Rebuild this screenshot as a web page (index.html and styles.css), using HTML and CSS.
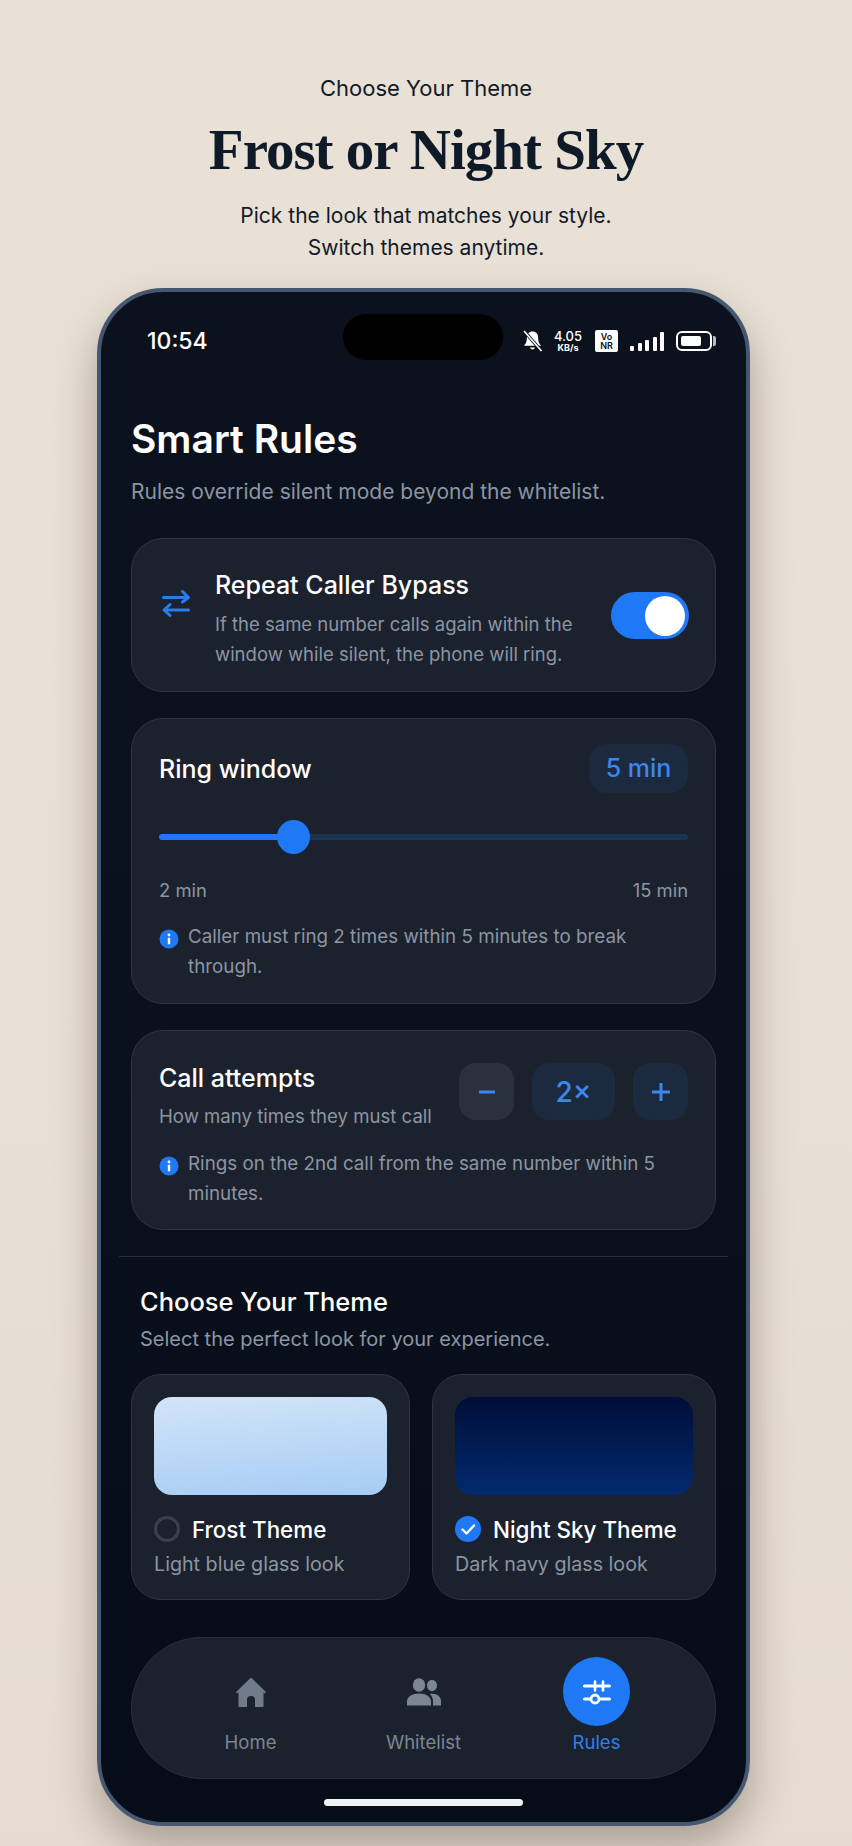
FILE: index.html
```html
<!DOCTYPE html>
<html lang="en">
<head>
    <meta charset="UTF-8">
    <meta name="viewport" content="width=device-width, initial-scale=1.0">
    <title>Frost or Night Sky</title>
    <link rel="stylesheet" href="styles.css">
</head>
<body>
    <header class="promo">
        <p class="promo-kicker">Choose Your Theme</p>
        <h1 class="promo-title">Frost or Night Sky</h1>
        <p class="promo-sub">Pick the look that matches your style.<br>Switch themes anytime.</p>
    </header>

    <main class="phone">
        <div class="island"></div>

        <div class="status">
            <span class="status-time">10:54</span>
            <div class="status-icons">
                <svg class="ico-bell" viewBox="0 0 21 22" width="21" height="22">
                    <path d="M10.500 1.500c-3.600 0-5.600 2.600-5.600 5.800 0 4.400-1.100 6.600-3 8.500h17.200c-1.900-1.900-3-4.100-3-8.500 0-3.200-2-5.800-5.600-5.800z" fill="#fff"/>
                    <path d="M8 17.500a2.600 2.600 0 0 0 5 0z" fill="#fff"/>
                    <path d="M3 2 19 20.500" stroke="#0a111c" stroke-width="3.400"/>
                    <path d="M2 1 19.500 21" stroke="#fff" stroke-width="1.700"/>
                </svg>
                <div class="speed"><span>4.05</span><span class="speed-unit">KB/s</span></div>
                <div class="vonr">Vo<br>NR</div>
                <div class="signal">
                    <i class="bar bar-1"></i><i class="bar bar-2"></i><i class="bar bar-3"></i><i class="bar bar-4"></i><i class="bar bar-5"></i>
                </div>
                <div class="battery"><div class="battery-level"></div></div>
            </div>
        </div>

        <h2 class="page-title">Smart Rules</h2>
        <p class="page-sub">Rules override silent mode beyond the whitelist.</p>

        <section class="card card-bypass">
            <svg class="ico-swap" viewBox="0 0 28 28" width="28" height="28" fill="none" stroke="#2a7de8" stroke-width="3" stroke-linecap="round" stroke-linejoin="round">
                <path d="M1.500 8.500h24.500M20.500 2.500 26.500 8.500 20.500 13"/>
                <path d="M26.500 21h-24.500M8 15.500 2 21 8 26.500"/>
            </svg>
            <div class="bypass-text">
                <h3 class="card-title">Repeat Caller Bypass</h3>
                <p class="card-desc">If the same number calls again within the window while silent, the phone will ring.</p>
            </div>
            <div class="toggle"><div class="toggle-knob"></div></div>
        </section>

        <section class="card card-ring">
            <div class="ring-head">
                <h3 class="card-title">Ring window</h3>
                <span class="pill">5 min</span>
            </div>
            <div class="slider">
                <div class="slider-track"></div>
                <div class="slider-fill" style="width: 25%"></div>
                <div class="slider-thumb" style="left: 22.400%"></div>
            </div>
            <div class="slider-labels"><span>2 min</span><span>15 min</span></div>
            <div class="info">
                <svg class="ico-info" viewBox="0 0 20 20" width="20" height="20">
                    <circle cx="10" cy="10" r="9.500" fill="#1f78f5"/>
                    <circle cx="10" cy="6" r="1.400" fill="#fff"/>
                    <rect x="8.800" y="8.800" width="2.400" height="6.500" rx="0.600" fill="#fff"/>
                </svg>
                <p>Caller must ring 2 times within 5 minutes to break through.</p>
            </div>
        </section>

        <section class="card card-attempts">
            <div class="attempts-row">
                <div>
                    <h3 class="card-title">Call attempts</h3>
                    <p class="attempts-sub">How many times they must call</p>
                </div>
                <div class="stepper">
                    <span class="step step-minus">
                        <svg viewBox="0 0 18 18" width="18" height="18"><path d="M1 9h16" stroke="#3b87ef" stroke-width="3"/></svg>
                    </span>
                    <span class="step step-value">2&times;</span>
                    <span class="step">
                        <svg viewBox="0 0 20 20" width="20" height="20"><path d="M1 10h18M10 1v18" stroke="#3b87ef" stroke-width="3"/></svg>
                    </span>
                </div>
            </div>
            <div class="info">
                <svg class="ico-info" viewBox="0 0 20 20" width="20" height="20">
                    <circle cx="10" cy="10" r="9.500" fill="#1f78f5"/>
                    <circle cx="10" cy="6" r="1.400" fill="#fff"/>
                    <rect x="8.800" y="8.800" width="2.400" height="6.500" rx="0.600" fill="#fff"/>
                </svg>
                <p>Rings on the 2nd call from the same number within 5 minutes.</p>
            </div>
        </section>

        <hr class="divider">

        <h3 class="theme-title">Choose Your Theme</h3>
        <p class="theme-sub">Select the perfect look for your experience.</p>

        <div class="themes">
            <div class="theme">
                <div class="preview preview-frost"></div>
                <div class="theme-name">
                    <span class="radio"></span>
                    <span>Frost Theme</span>
                </div>
                <p class="theme-desc">Light blue glass look</p>
            </div>
            <div class="theme">
                <div class="preview preview-night"></div>
                <div class="theme-name">
                    <svg class="radio-on" viewBox="0 0 26 26" width="26" height="26">
                        <circle cx="13" cy="13" r="13" fill="#1f78f5"/>
                        <path d="M7.500 13.500l4 4 7.500-8" fill="none" stroke="#fff" stroke-width="2.400" stroke-linecap="round" stroke-linejoin="round"/>
                    </svg>
                    <span>Night Sky Theme</span>
                </div>
                <p class="theme-desc">Dark navy glass look</p>
            </div>
        </div>

        <nav class="tabs">
            <a class="tab">
                <span class="tab-icon">
                    <svg viewBox="0 0 30 30" width="30" height="30">
                        <path fill-rule="evenodd" d="M15 0.500 30 15l-1 1.500-1.500-1.200V29a1 1 0 0 1-1 1H19v-7a4 4 0 0 0-8 0v7H3.500a1 1 0 0 1-1-1V15.300L1 16.500 0 15z" fill="#717c8b"/>
                    </svg>
                </span>
                <span class="tab-label">Home</span>
            </a>
            <a class="tab">
                <span class="tab-icon">
                    <svg viewBox="0 0 34 28" width="34" height="28" fill="#7b8695">
                        <ellipse cx="12" cy="7" rx="6.200" ry="6.800"/>
                        <ellipse cx="25" cy="7.500" rx="5" ry="5.800"/>
                        <path d="M0 27.500v-4c0-4.500 5-8 12-8s12 3.500 12 8v4z"/>
                        <path d="M26 27.500v-4c0-3-1-5.500-3.200-7.500 6-1.500 11.200 2 11.200 7v4.500z"/>
                    </svg>
                </span>
                <span class="tab-label">Whitelist</span>
            </a>
            <a class="tab tab-active">
                <span class="tab-icon">
                    <svg viewBox="0 0 28 26" width="28" height="26" fill="none" stroke="#fff" stroke-width="3" stroke-linecap="round">
                        <path d="M1.500 7h25M1.500 20h25"/>
                        <path d="M12 2.500v9M20 2.500v9" stroke-width="2.600"/>
                        <circle cx="12" cy="20" r="4" fill="#1f78f5" stroke-width="2.800"/>
                    </svg>
                </span>
                <span class="tab-label">Rules</span>
            </a>
        </nav>

        <div class="home-bar"></div>
    </main>
</body>
</html>
```

FILE: styles.css
```css
/* General Styling */
* {
    box-sizing: border-box;
}

html, body {
    margin: 0;
    padding: 0;
}

body {
    width: 852px;
    height: 1846px;
    overflow: hidden;
    font-family: Inter, "Noto Sans", sans-serif;
    background: linear-gradient(180deg, #e9e0d6 0%, #e8dfd5 60%, #e5dbd0 100%);
    color: #111a27;
}

h1, h2, h3, p {
    margin: 0;
    font-weight: normal;
}

/* Promo header */
.promo {
    height: 288px;
    padding-top: 74px;
    text-align: center;
}

.promo-kicker {
    font-size: 22px;
    line-height: 28px;
}

.promo-title {
    margin-top: 14px;
    font-family: "Liberation Serif", serif;
    font-size: 57px;
    font-weight: bold;
    line-height: 68px;
    letter-spacing: -1px;
    color: #0f1a29;
}

.promo-sub {
    margin-top: 16px;
    font-size: 21px;
    line-height: 32px;
}

/* Phone */
.phone {
    position: relative;
    width: 653px;
    height: 1538px;
    margin-left: 97px;
    padding: 0 30px;
    border: 4px solid #465870;
    border-radius: 66px;
    background: linear-gradient(180deg, #0b121d 0%, #0a111c 50%, #070d18 100%);
    box-shadow: 0 20px 40px rgba(60, 45, 30, 0.35);
}

.island {
    position: absolute;
    top: 22px;
    left: 242px;
    width: 160px;
    height: 46px;
    border-radius: 23px;
    background: #000;
}

.status {
    display: flex;
    justify-content: space-between;
    align-items: center;
    height: 32px;
    margin: 33px -1px 0 16px;
    color: #fff;
}

.status-time {
    font-size: 23px;
    font-weight: 500;
}

.status-icons {
    display: flex;
    align-items: center;
}

.speed {
    display: flex;
    flex-direction: column;
    align-items: center;
    width: 30px;
    margin-left: 10px;
    font-size: 13px;
    font-weight: 500;
    line-height: 13px;
}

.speed-unit {
    font-size: 9px;
    font-weight: 700;
    line-height: 10px;
}

.vonr {
    width: 23px;
    height: 22px;
    margin-left: 12px;
    padding-top: 2px;
    border-radius: 2px;
    background: #fff;
    color: #0a111c;
    font-size: 9px;
    font-weight: 600;
    line-height: 9px;
    text-align: center;
}

.signal {
    display: flex;
    align-items: flex-end;
    gap: 3.500px;
    height: 19px;
    margin-left: 12px;
}

.bar {
    display: block;
    width: 4px;
    border-radius: 1px;
    background: #fff;
}

.bar-1 { height: 5px; }
.bar-2 { height: 8px; }
.bar-3 { height: 11px; }
.bar-4 { height: 14px; }
.bar-5 { height: 19px; }

.battery {
    position: relative;
    width: 36px;
    height: 20px;
    margin: 0 5px 0 12px;
    padding: 3px;
    border: 2px solid #fff;
    border-radius: 6px;
}

.battery::after {
    content: "";
    position: absolute;
    top: 3px;
    right: -6px;
    width: 3px;
    height: 10px;
    border-radius: 0 2px 2px 0;
    background: #b9bec6;
}

.battery-level {
    width: 78%;
    height: 100%;
    border-radius: 2px;
    background: #fff;
}

.page-title {
    margin-top: 59px;
    font-size: 39px;
    font-weight: 600;
    line-height: 46px;
    color: #fff;
}

.page-sub {
    margin-top: 16px;
    font-size: 21px;
    line-height: 28px;
    color: #8c95a4;
}

/* Cards */
.card {
    border: 1px solid #2e3642;
    border-radius: 32px;
    background: #1b222d;
}

.card-title {
    font-size: 25px;
    font-weight: 500;
    line-height: 32px;
    color: #fff;
}

.card-desc {
    margin-top: 8px;
    font-size: 18.500px;
    line-height: 30px;
    color: #8c95a4;
}

.card-bypass {
    display: flex;
    align-items: center;
    height: 154px;
    margin-top: 32px;
    padding: 0 26px 0 30px;
}

.ico-swap {
    flex: none;
    align-self: flex-start;
    margin-top: 50px;
}

.bypass-text {
    flex: 1;
    margin-left: 25px;
    padding-top: 8px;
}

.toggle {
    flex: none;
    width: 78px;
    height: 47px;
    margin-left: 20px;
    padding: 4px;
    border-radius: 24px;
    background: #1f78f5;
}

.toggle-knob {
    width: 40px;
    height: 40px;
    margin-left: auto;
    border-radius: 50%;
    background: #fff;
}

.card-ring {
    height: 286px;
    margin-top: 26px;
    padding: 25px 27px 0;
}

.ring-head {
    display: flex;
    justify-content: space-between;
    align-items: center;
}

.pill {
    width: 99px;
    height: 49px;
    border-radius: 18px;
    background: #1b2a3e;
    color: #3b87ef;
    font-size: 25px;
    font-weight: 500;
    line-height: 49px;
    text-align: center;
}

.slider {
    position: relative;
    height: 34px;
    margin-top: 27px;
}

.slider-track, .slider-fill {
    position: absolute;
    top: 14px;
    left: 0;
    height: 6px;
    border-radius: 3px;
}

.slider-track {
    width: 100%;
    background: #1c3454;
}

.slider-fill {
    background: #1f78f5;
}

.slider-thumb {
    position: absolute;
    top: 0;
    width: 33px;
    height: 34px;
    border-radius: 50%;
    background: #1f78f5;
}

.slider-labels {
    display: flex;
    justify-content: space-between;
    margin-top: 24px;
    font-size: 18.400px;
    line-height: 24px;
    color: #8c95a4;
}

.info {
    display: flex;
    margin-top: 20px;
}

.info p {
    flex: 1;
    margin-left: 9px;
    font-size: 18.800px;
    line-height: 30px;
    color: #8c95a4;
}

.ico-info {
    flex: none;
    margin-top: 7px;
}

.card-attempts {
    height: 200px;
    margin-top: 26px;
    padding: 31px 27px 0;
}

.attempts-row {
    display: flex;
    justify-content: space-between;
}

.attempts-sub {
    margin-top: 9px;
    font-size: 18.600px;
    line-height: 26px;
    color: #8c95a4;
}

.stepper {
    display: flex;
    gap: 18px;
    margin-top: 1px;
}

.step {
    display: flex;
    justify-content: center;
    align-items: center;
    width: 55px;
    height: 57px;
    border-radius: 17px;
    background: #1b2a3e;
    color: #3b87ef;
}

.step-minus {
    background: #2a313c;
}

.step-value {
    width: 83px;
    font-size: 28px;
    font-weight: 500;
}

.divider {
    height: 1px;
    margin: 26px -12px 0;
    border: 0;
    background: #262d38;
}

.theme-title {
    margin: 28px 0 0 9px;
    font-size: 25.500px;
    font-weight: 500;
    line-height: 34px;
    color: #fff;
}

.theme-sub {
    margin: 6px 0 0 9px;
    font-size: 20px;
    line-height: 28px;
    color: #8c95a4;
}

/* Theme cards */
.themes {
    display: grid;
    grid-template-columns: 279px 1fr;
    gap: 22px;
    margin-top: 21px;
}

.theme {
    height: 226px;
    padding: 22px;
    border: 1px solid #2e3642;
    border-radius: 30px;
    background: #1b222d;
}

.preview {
    height: 98px;
    border-radius: 18px;
}

.preview-frost {
    background: linear-gradient(175deg, #d2e4f8 0%, #a6ccf4 100%);
}

.preview-night {
    background: linear-gradient(180deg, #000e38 0%, #022a6e 100%);
}

.theme-name {
    display: flex;
    align-items: center;
    gap: 12px;
    height: 26px;
    margin-top: 21px;
    font-size: 22.400px;
    font-weight: 500;
    color: #fff;
}

.radio {
    width: 26px;
    height: 26px;
    border: 3px solid #3a414c;
    border-radius: 50%;
}

.theme-desc {
    margin-top: 9px;
    font-size: 19.700px;
    line-height: 26px;
    color: #8c95a4;
}

/* Bottom nav */
.tabs {
    display: grid;
    grid-template-columns: repeat(3, 173px);
    justify-content: center;
    height: 142px;
    margin-top: 37px;
    padding-top: 19px;
    border: 1px solid #2a313c;
    border-radius: 71px;
    background: #1b222d;
}

.tab {
    display: flex;
    flex-direction: column;
    align-items: center;
}

.tab-icon {
    display: flex;
    justify-content: center;
    align-items: center;
    width: 67px;
    height: 69px;
    border-radius: 50%;
}

.tab-label {
    margin-top: 4px;
    font-size: 18.500px;
    line-height: 24px;
    color: #7b8695;
}

.tab-active .tab-icon {
    background: #1f78f5;
}

.tab-active .tab-label {
    color: #2f80ed;
}

.home-bar {
    width: 199px;
    height: 7px;
    margin: 20px auto 0;
    border-radius: 4px;
    background: #f1f2f3;
}
```
